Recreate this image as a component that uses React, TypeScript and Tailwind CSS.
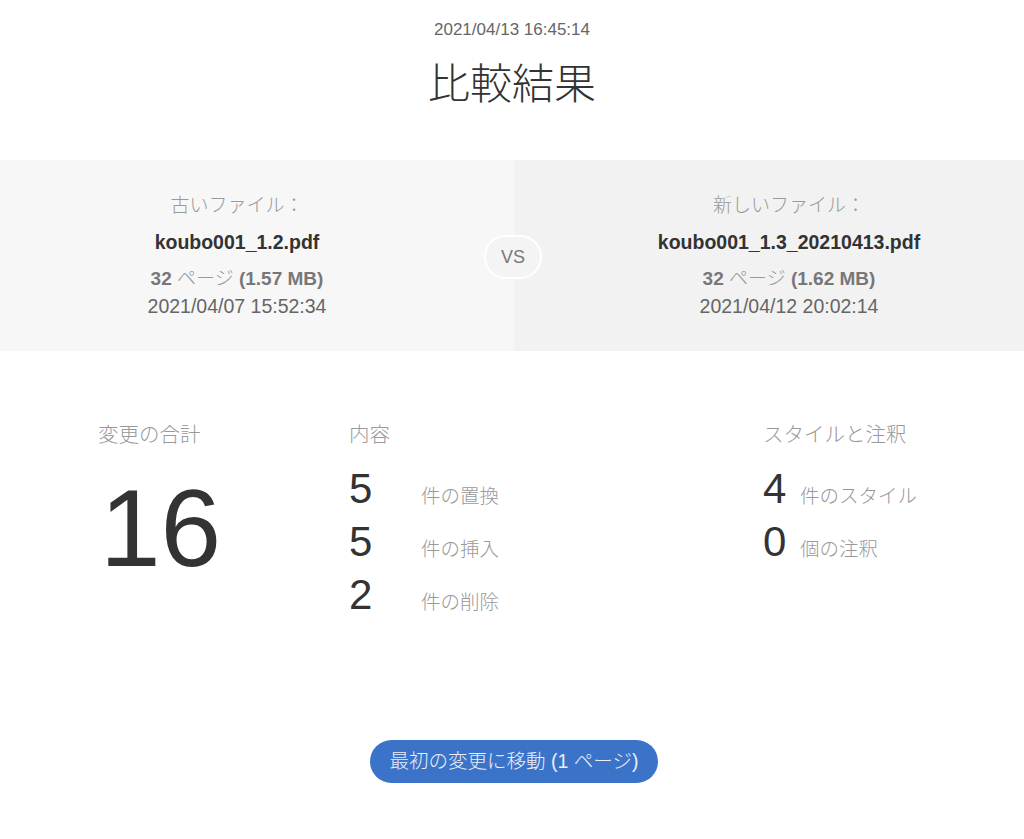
import React from "react";

const FONT = { fontFamily: '"Liberation Sans", Arial, "Noto Sans CJK JP", sans-serif' };

function FileInfo({ label, name, size, date }: { label: string; name: string; size: string; date: string }) {
  return (
    <div className="flex flex-col items-center">
      <div className="text-[19px] font-light leading-[24px] text-[#999999]">{label}</div>
      <div className="mt-[12px] text-[19.5px] font-bold leading-[24px] text-[#333333]">{name}</div>
      <div className="mt-[13px] text-[19px] leading-[24px] text-[#777777]">
        <span className="font-bold">32</span> <span className="font-light text-[#999999]">ページ</span>{" "}
        <span className="font-bold">({size})</span>
      </div>
      <div className="mt-[3px] text-[19.5px] leading-[24px] text-[#666666]">{date}</div>
    </div>
  );
}

function Row({ n, label }: { n: string; label: string }) {
  return (
    <div className="flex items-baseline h-[53px]">
      <span className="w-[72px] text-[42px] leading-[53px] text-[#333333]">{n}</span>
      <span className="text-[19.5px] font-light text-[#999999]">{label}</span>
    </div>
  );
}

function Row2({ n, label }: { n: string; label: string }) {
  return (
    <div className="flex items-baseline h-[53px]">
      <span className="w-[37px] text-[42px] leading-[53px] text-[#333333]">{n}</span>
      <span className="text-[19.5px] font-light text-[#999999]">{label}</span>
    </div>
  );
}

export default function App() {
  return (
    <div className="w-[1024px] h-[839px] bg-white" style={FONT}>
      <div className="flex flex-col items-center pt-[20px]">
        <div className="text-[17px] leading-[20px] text-[#666666]">2021/04/13 16:45:14</div>
        <div className="mt-[17px] text-[42px] font-light leading-[56px] text-[#333333]">比較結果</div>
      </div>

      <div className="relative mt-[47px] flex h-[191px]">
        <div className="flex w-[514px] items-center justify-center bg-[#f7f7f7] pr-[40px]">
          <FileInfo label="古いファイル：" name="koubo001_1.2.pdf" size="1.57 MB" date="2021/04/07 15:52:34" />
        </div>
        <div className="flex flex-1 items-center justify-center bg-[#f2f2f2] pl-[40px]">
          <FileInfo label="新しいファイル：" name="koubo001_1.3_20210413.pdf" size="1.62 MB" date="2021/04/12 20:02:14" />
        </div>
        <div className="absolute left-[484px] top-[75px] flex h-[44px] w-[58px] items-center justify-center rounded-full border-2 border-white bg-[#f4f4f4] text-[18px] text-[#777777]">
          VS
        </div>
      </div>

      <div className="mt-[71px] grid grid-cols-[251px_414px_1fr] pl-[98px]">
        <div>
          <div className="text-[20.5px] font-light leading-[26px] text-[#999999]">変更の合計</div>
          <div className="mt-[30px] pl-[2px] text-[109px] leading-[100px] text-[#333333]">16</div>
        </div>
        <div>
          <div className="text-[20.5px] font-light leading-[26px] text-[#999999]">内容</div>
          <div className="mt-[14px]">
            <Row n="5" label="件の置換" />
            <Row n="5" label="件の挿入" />
            <Row n="2" label="件の削除" />
          </div>
        </div>
        <div>
          <div className="text-[20.5px] font-light leading-[26px] text-[#999999]">スタイルと注釈</div>
          <div className="mt-[14px]">
            <Row2 n="4" label="件のスタイル" />
            <Row2 n="0" label="個の注釈" />
          </div>
        </div>
      </div>

      <div className="mt-[119px] flex justify-center">
        <button className="h-[43px] w-[288px] translate-x-[2px] rounded-full bg-[#3b73c8] text-[19.5px] font-light text-[#e9eef8]">
          最初の変更に移動 (1 ページ)
        </button>
      </div>
    </div>
  );
}
